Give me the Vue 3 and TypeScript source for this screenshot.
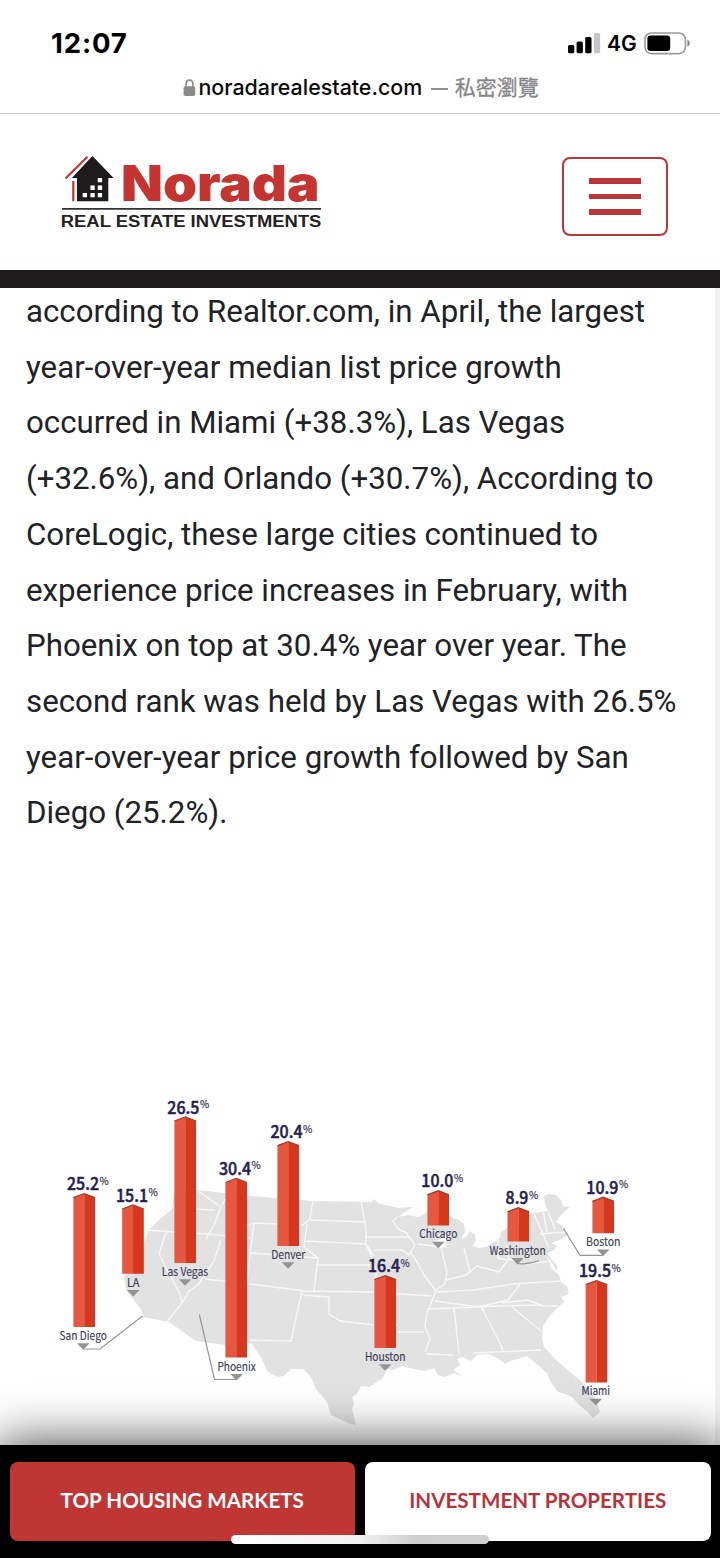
<script setup lang="ts">
interface City {
  name: string
  value: string
  cx: number
  top: number
  bottom: number
  valueX: number
  labelX: number
  labelW: number
}

const cities: City[] = [
  { name: 'San Diego', value: '25.2', cx: 84.2, top: 1193.7, bottom: 1327, valueX: 67, labelX: 83.2, labelW: 47.4 },
  { name: 'LA', value: '15.1', cx: 133, top: 1205, bottom: 1273.7, valueX: 116, labelX: 133.2, labelW: 12.6 },
  { name: 'Las Vegas', value: '26.5', cx: 185.2, top: 1117, bottom: 1263, valueX: 167.3, labelX: 185, labelW: 46.4 },
  { name: 'Phoenix', value: '30.4', cx: 236.2, top: 1178.5, bottom: 1357.6, valueX: 219, labelX: 236.6, labelW: 38.4 },
  { name: 'Denver', value: '20.4', cx: 288.2, top: 1141.7, bottom: 1246, valueX: 270.5, labelX: 288.2, labelW: 34 },
  { name: 'Houston', value: '16.4', cx: 385.2, top: 1275.7, bottom: 1348, valueX: 368, labelX: 385.2, labelW: 40.6 },
  { name: 'Chicago', value: '10.0', cx: 438.2, top: 1190.8, bottom: 1225.4, valueX: 421.3, labelX: 438.3, labelW: 38 },
  { name: 'Washington', value: '8.9', cx: 518.3, top: 1207.8, bottom: 1241.6, valueX: 505.6, labelX: 517.6, labelW: 56.4 },
  { name: 'Boston', value: '10.9', cx: 603.2, top: 1197.3, bottom: 1233.3, valueX: 586.3, labelX: 603.2, labelW: 34.4 },
  { name: 'Miami', value: '19.5', cx: 596.4, top: 1280.7, bottom: 1382.4, valueX: 579, labelX: 595.8, labelW: 28.6 },
]

const lines: string[] = [
  'according to Realtor.com, in April, the largest',
  'year-over-year median list price growth',
  'occurred in Miami (+38.3%), Las Vegas',
  '(+32.6%), and Orlando (+30.7%), According to',
  'CoreLogic, these large cities continued to',
  'experience price increases in February, with',
  'Phoenix on top at 30.4% year over year. The',
  'second rank was held by Las Vegas with 26.5%',
  'year-over-year price growth followed by San',
  'Diego (25.2%).',
]

const face = (c: City, side: number): string =>
  `M${c.cx} ${c.top}L${c.cx + side * 10.8} ${c.top + 4}V${c.bottom}H${c.cx}Z`
const cap = (c: City): string =>
  `M${c.cx - 10.8} ${c.top + 4}L${c.cx} ${c.top}L${c.cx + 10.8} ${c.top + 4}`
const pointer = (c: City): string =>
  `M${c.labelX - 6.3} ${c.bottom + 16.3}h12.6l-6.3 6.5z`
const valueWidth = (c: City): number => (c.value.length === 3 ? 22.8 : 32)
const pctX = (c: City): number => c.valueX + valueWidth(c) + 0.6
</script>

<template>
  <div class="screen">
    <div class="status">
      <span class="clock">12:07</span>
      <div class="indicators">
        <svg class="signal" width="33" height="21" viewBox="0 0 33 21">
          <rect x="0" y="12" width="6.3" height="8.3" rx="1.6" />
          <rect x="8.6" y="8.6" width="6.3" height="11.7" rx="1.6" />
          <rect x="17.2" y="4" width="6.3" height="16.3" rx="1.6" />
          <rect x="25.8" y="0" width="6.3" height="20.3" rx="1.6" fill="#c6c6c6" />
        </svg>
        <span class="net">4G</span>
        <svg class="battery" width="48" height="23" viewBox="0 0 48 23">
          <rect x="1" y="1" width="40.4" height="20.6" rx="6.3" fill="none" stroke="#9a9a9a" stroke-width="1.6" />
          <rect x="3.4" y="3.6" width="22.8" height="15.4" rx="3.2" />
          <path d="M43.4 7.8c3.2 1.2 3.2 5.8 0 7z" fill="#8b8b8b" />
        </svg>
      </div>
    </div>

    <div class="address">
      <svg class="lock" width="13" height="18" viewBox="0 0 13 18">
        <path d="M3.1 8V4.9C3.1 2.5 4.5 1.1 6.5 1.1s3.4 1.4 3.4 3.8V8" fill="none" stroke="#8a8a8a" stroke-width="1.6" />
        <rect x=".6" y="7.2" width="11.6" height="9.9" rx="1.8" fill="#8a8a8a" />
      </svg>
      <span class="domain">noradarealestate.com</span>
      <span class="dash"></span>
      <span class="private">私密瀏覽</span>
    </div>

    <header class="site-head">
      <svg class="logo" width="270" height="80" viewBox="58 152 270 80">
        <path d="M65.5 178.5 87.5 156.7M73.3 181V201.3" fill="none" stroke="#c43532" stroke-width="2.2" />
        <path d="M92.4 156 L113.6 178 H108.3 V201.3 H77 V178 H71.8 Z" fill="#1f1b1d" />
        <path d="M97.8 178h4.3v4.3h-4.3zM90.4 185.6h4.3v4.3h-4.3zM97.8 185.6h4.3v4.3h-4.3zM82.7 193h4.3v4.3h-4.3zM90.4 193h4.3v4.3h-4.3zM97.8 193h4.3v4.3h-4.3z" fill="#fff" />
        <text class="logo-name" x="121" y="201.3" textLength="198.5" lengthAdjust="spacingAndGlyphs">Norada</text>
        <path d="M62 208.8H321" stroke="#343033" stroke-width="1.8" />
        <text class="logo-sub" x="60.8" y="227.2" textLength="260.6" lengthAdjust="spacingAndGlyphs">REAL ESTATE INVESTMENTS</text>
      </svg>
      <button class="menu" type="button" aria-label="Menu"><i></i><i></i><i></i></button>
    </header>

    <main class="page">
      <p class="copy"><span v-for="line in lines" :key="line">{{ line }}</span></p>

      <svg class="chart" width="720" height="365" viewBox="0 1080 720 365">
        <path
          class="land"
          d="M198 1190L250 1196L313 1201L372 1202L374 1199L378 1203L390 1206L398 1208L413 1207L405 1212L398 1217L408 1215L418 1217L427 1213L434 1216L450 1217L458 1219L464 1224L465 1232L461 1239L466 1237L470 1231L475 1235L476 1241L472 1246L480 1248L486 1247L500 1238L501 1232L507 1228L520 1222L527 1215L534 1213L548 1211L545 1204L544 1196L549 1194L556 1195L562 1201L562 1206L570 1207L564 1212L559 1217L556 1222L563 1226L564 1231L568 1234L562 1239L551 1243L557 1246L554 1250L548 1253L551 1259L557 1265L557 1271L552 1263L547 1256L551 1268L559 1275L561 1282L567 1286L569 1294L561 1297L564 1302L557 1308L549 1317L543 1326L542 1339L544 1347L556 1360L570 1372L582 1382L595 1398L600 1412L593 1418L588 1412L579 1405L572 1397L565 1394L558 1392L550 1381L547 1373L538 1365L527 1356L518 1359L510 1361L505 1364L499 1359L489 1354L477 1355L471 1361L463 1357L457 1359L460 1365L453 1370L463 1376L454 1373L445 1377L438 1375L434 1368L425 1371L414 1369L402 1366L393 1370L387 1369L383 1378L369 1387L361 1386L357 1394L352 1397L354 1404L352 1409L356 1425L348 1423L331 1415L327 1402L316 1389L311 1377L303 1369L291 1369L284 1376L277 1377L267 1371L261 1357L251 1343L225 1345L196 1341L169 1322L143 1317L141 1309L133 1299L126 1290L124 1277L128 1268L140 1257L145 1240L149 1230L160 1219L172 1209L174 1192Z"
        />
        <path d="M434 1241L440 1240L448 1234L449 1226L446 1241L447 1247L440 1248Z" fill="#fff" />
        <g class="borders">
          <path d="M147 1230L173 1232L208 1234L250 1238M166 1232L159 1254L180 1294L182 1303L167 1322M198 1191L221 1207L214 1225L206 1239M222 1205L226 1198M174 1208L215 1210M221 1240L214 1261L198 1285L189 1291L182 1303M205 1279L250 1284L305 1291L370 1292L431 1296" />
          <path d="M227 1222L247 1226L254 1223L303 1225L310 1219L313 1201M307 1224L304 1247L318 1258L314 1291M254 1223L250 1253L247 1287M250 1253L318 1258M316 1265L374 1265M305 1241L366 1244L374 1256" />
          <path d="M311 1220L365 1222M361 1201L366 1229L366 1244L371 1256L376 1270L376 1302M366 1237L410 1237L415 1245L409 1255L402 1250L374 1250M302 1291L291 1341L250 1340M303 1295L329 1297V1314L340 1321L374 1325L398 1325" />
          <path d="M397 1217L393 1221L398 1229L407 1233L410 1240M410 1252L417 1262L424 1275L436 1291L427 1313L425 1326L430 1339L425 1352M397 1332L424 1332M427 1354L453 1355M427 1309L500 1306L542 1305" />
          <path d="M418 1244L441 1247L447 1272L445 1284L436 1290M446 1280L466 1275L477 1266L499 1272L509 1259M464 1248L470 1271M437 1292L474 1290L513 1284L561 1281M435 1301L478 1307L508 1300L521 1283" />
          <path d="M454 1308L459 1354M481 1306L501 1345L503 1351M473 1353L541 1350M512 1307L541 1331M502 1303L528 1300L543 1306L558 1306M507 1245L509 1259L526 1264L551 1261M498 1240V1258L507 1260M534 1214L543 1234L549 1248M543 1211L547 1232M548 1212L555 1229M540 1234L565 1232" />
        </g>
        <path class="leader" d="M83 1349H100L142.5 1316M199.3 1314.5L214.5 1379.5H237M517 1263.5C526 1264.5 533 1263 539 1260.5M563.5 1228.5L580 1255.3H603" />
        <g v-for="c in cities" :key="c.name">
          <path :d="face(c, -1)" fill="#e5573f" />
          <path :d="face(c, 1)" fill="#d6371f" />
          <path :d="cap(c)" fill="none" stroke="#a83a28" stroke-width="1.3" />
          <path :d="pointer(c)" fill="#949494" />
          <text class="value" :x="c.valueX" :y="c.top - 3.4" :textLength="valueWidth(c)" lengthAdjust="spacingAndGlyphs">{{ c.value }}</text>
          <text class="pct" :x="pctX(c)" :y="c.top - 9.2">%</text>
          <text class="city" :x="c.labelX - c.labelW / 2" :y="c.bottom + 12.9" :textLength="c.labelW" lengthAdjust="spacingAndGlyphs">{{ c.name }}</text>
        </g>
      </svg>
    </main>

    <footer class="actions">
      <a class="btn primary">TOP HOUSING MARKETS</a>
      <a class="btn secondary">INVESTMENT PROPERTIES</a>
      <span class="home-indicator"></span>
    </footer>
  </div>
</template>

<style>
html, body { background: #fff; }
</style>

<style scoped>
.screen {
  width: 720px;
  height: 1558px;
  overflow: hidden;
  display: flex;
  flex-direction: column;
  background: #fff;
  box-sizing: border-box;
}
.status {
  height: 66px;
  flex: none;
  display: flex;
  justify-content: space-between;
  padding: 0 28px 0 51px;
  font-family: Inter, "Liberation Sans", sans-serif;
  color: #000;
}
.clock { margin-top: 26px; font-size: 27.5px; line-height: 34px; font-weight: 700; letter-spacing: 0.85px; }
.indicators { display: flex; align-items: flex-start; }
.signal { margin-top: 33px; }
.net { margin: 31px 7.3px 0 6.2px; font-size: 21px; line-height: 26px; font-weight: 600; }
.battery { margin-top: 32px; }
.address {
  height: 47px;
  flex: none;
  display: flex;
  align-items: flex-start;
  padding-left: 183px;
  border-bottom: 1px solid #c9c9c9;
}
.lock { margin-top: 13px; margin-right: 2.5px; }
.domain { margin-top: 6px; font: 500 21.4px/30px Inter, "Liberation Sans", sans-serif; color: #0a0a0a; white-space: nowrap; }
.dash { width: 17px; height: 2px; margin: 22px 6.5px 0 9px; background: #909093; }
.private { margin-top: 5px; font: 400 21px/30px "Noto Sans CJK TC", sans-serif; color: #858588; white-space: nowrap; -webkit-text-stroke: 0.3px #858588; }
.site-head {
  height: 174px;
  flex: none;
  box-sizing: border-box;
  display: flex;
  justify-content: space-between;
  align-items: flex-start;
  padding: 38px 52px 0 58px;
  border-bottom: 18px solid #1f1b1c;
}
.logo-name { font: 900 49.5px Inter, "Liberation Sans", sans-serif; fill: #c43532; }
.logo-sub { font: 700 15.6px "Liberation Sans", sans-serif; fill: #252123; }
.menu {
  width: 106px;
  height: 79px;
  margin-top: 5px;
  box-sizing: border-box;
  display: flex;
  flex-direction: column;
  align-items: center;
  justify-content: center;
  gap: 10px;
  padding: 0;
  border: 2px solid #b93738;
  border-radius: 8px;
  background: #fff;
}
.menu i { width: 52px; height: 5.6px; background: #b93738; }
.page {
  flex: 1;
  min-height: 0;
  display: flex;
  flex-direction: column;
  justify-content: space-between;
  box-shadow: inset -5px 0 #f1f1f1;
}
.copy {
  margin: -4px 0 0 26px;
  font: 400 31.25px/55.7px Roboto, "Liberation Sans", sans-serif;
  color: #212226;
}
.copy span { display: block; white-space: nowrap; }
.chart { display: block; flex: none; }
.land { fill: #e2e2e2; }
.borders { fill: none; stroke: #f8f8f8; stroke-width: 1.4; stroke-linejoin: round; }
.leader { fill: none; stroke: #969696; stroke-width: 1.2; }
.value { font: 500 17.6px "Noto Sans CJK SC", sans-serif; fill: #25204f; stroke: #25204f; stroke-width: 0.5px; }
.pct { font: 400 10px "Noto Sans CJK SC", sans-serif; fill: #48455d; stroke: #48455d; stroke-width: 0.25px; }
.city { font: 400 11.6px "Noto Sans CJK SC", sans-serif; fill: #3c3b58; stroke: #3c3b58; stroke-width: 0.15px; }
.actions {
  position: relative;
  height: 113.5px;
  flex: none;
  box-sizing: border-box;
  display: flex;
  gap: 10px;
  padding: 17.5px 9.5px 17.5px;
  background: #000;
  box-shadow: 0 0 50px 3px rgba(0, 0, 0, 0.7);
}
.btn {
  flex: 1;
  display: flex;
  align-items: center;
  justify-content: center;
  box-sizing: border-box;
  padding-bottom: 2px;
  border-radius: 8px;
  font: 700 20.6px/30px Lato, sans-serif;
  white-space: nowrap;
}
.primary { background: #c03634; color: #fff; }
.secondary { background: #fff; color: #b63439; }
.home-indicator {
  position: absolute;
  left: 231px;
  bottom: 14px;
  width: 258px;
  height: 9px;
  border-radius: 5px;
  background: linear-gradient(90deg, #fff 0%, #f1f1f1 50%, #cecece 72%, #cfcfcf 100%);
}
</style>
